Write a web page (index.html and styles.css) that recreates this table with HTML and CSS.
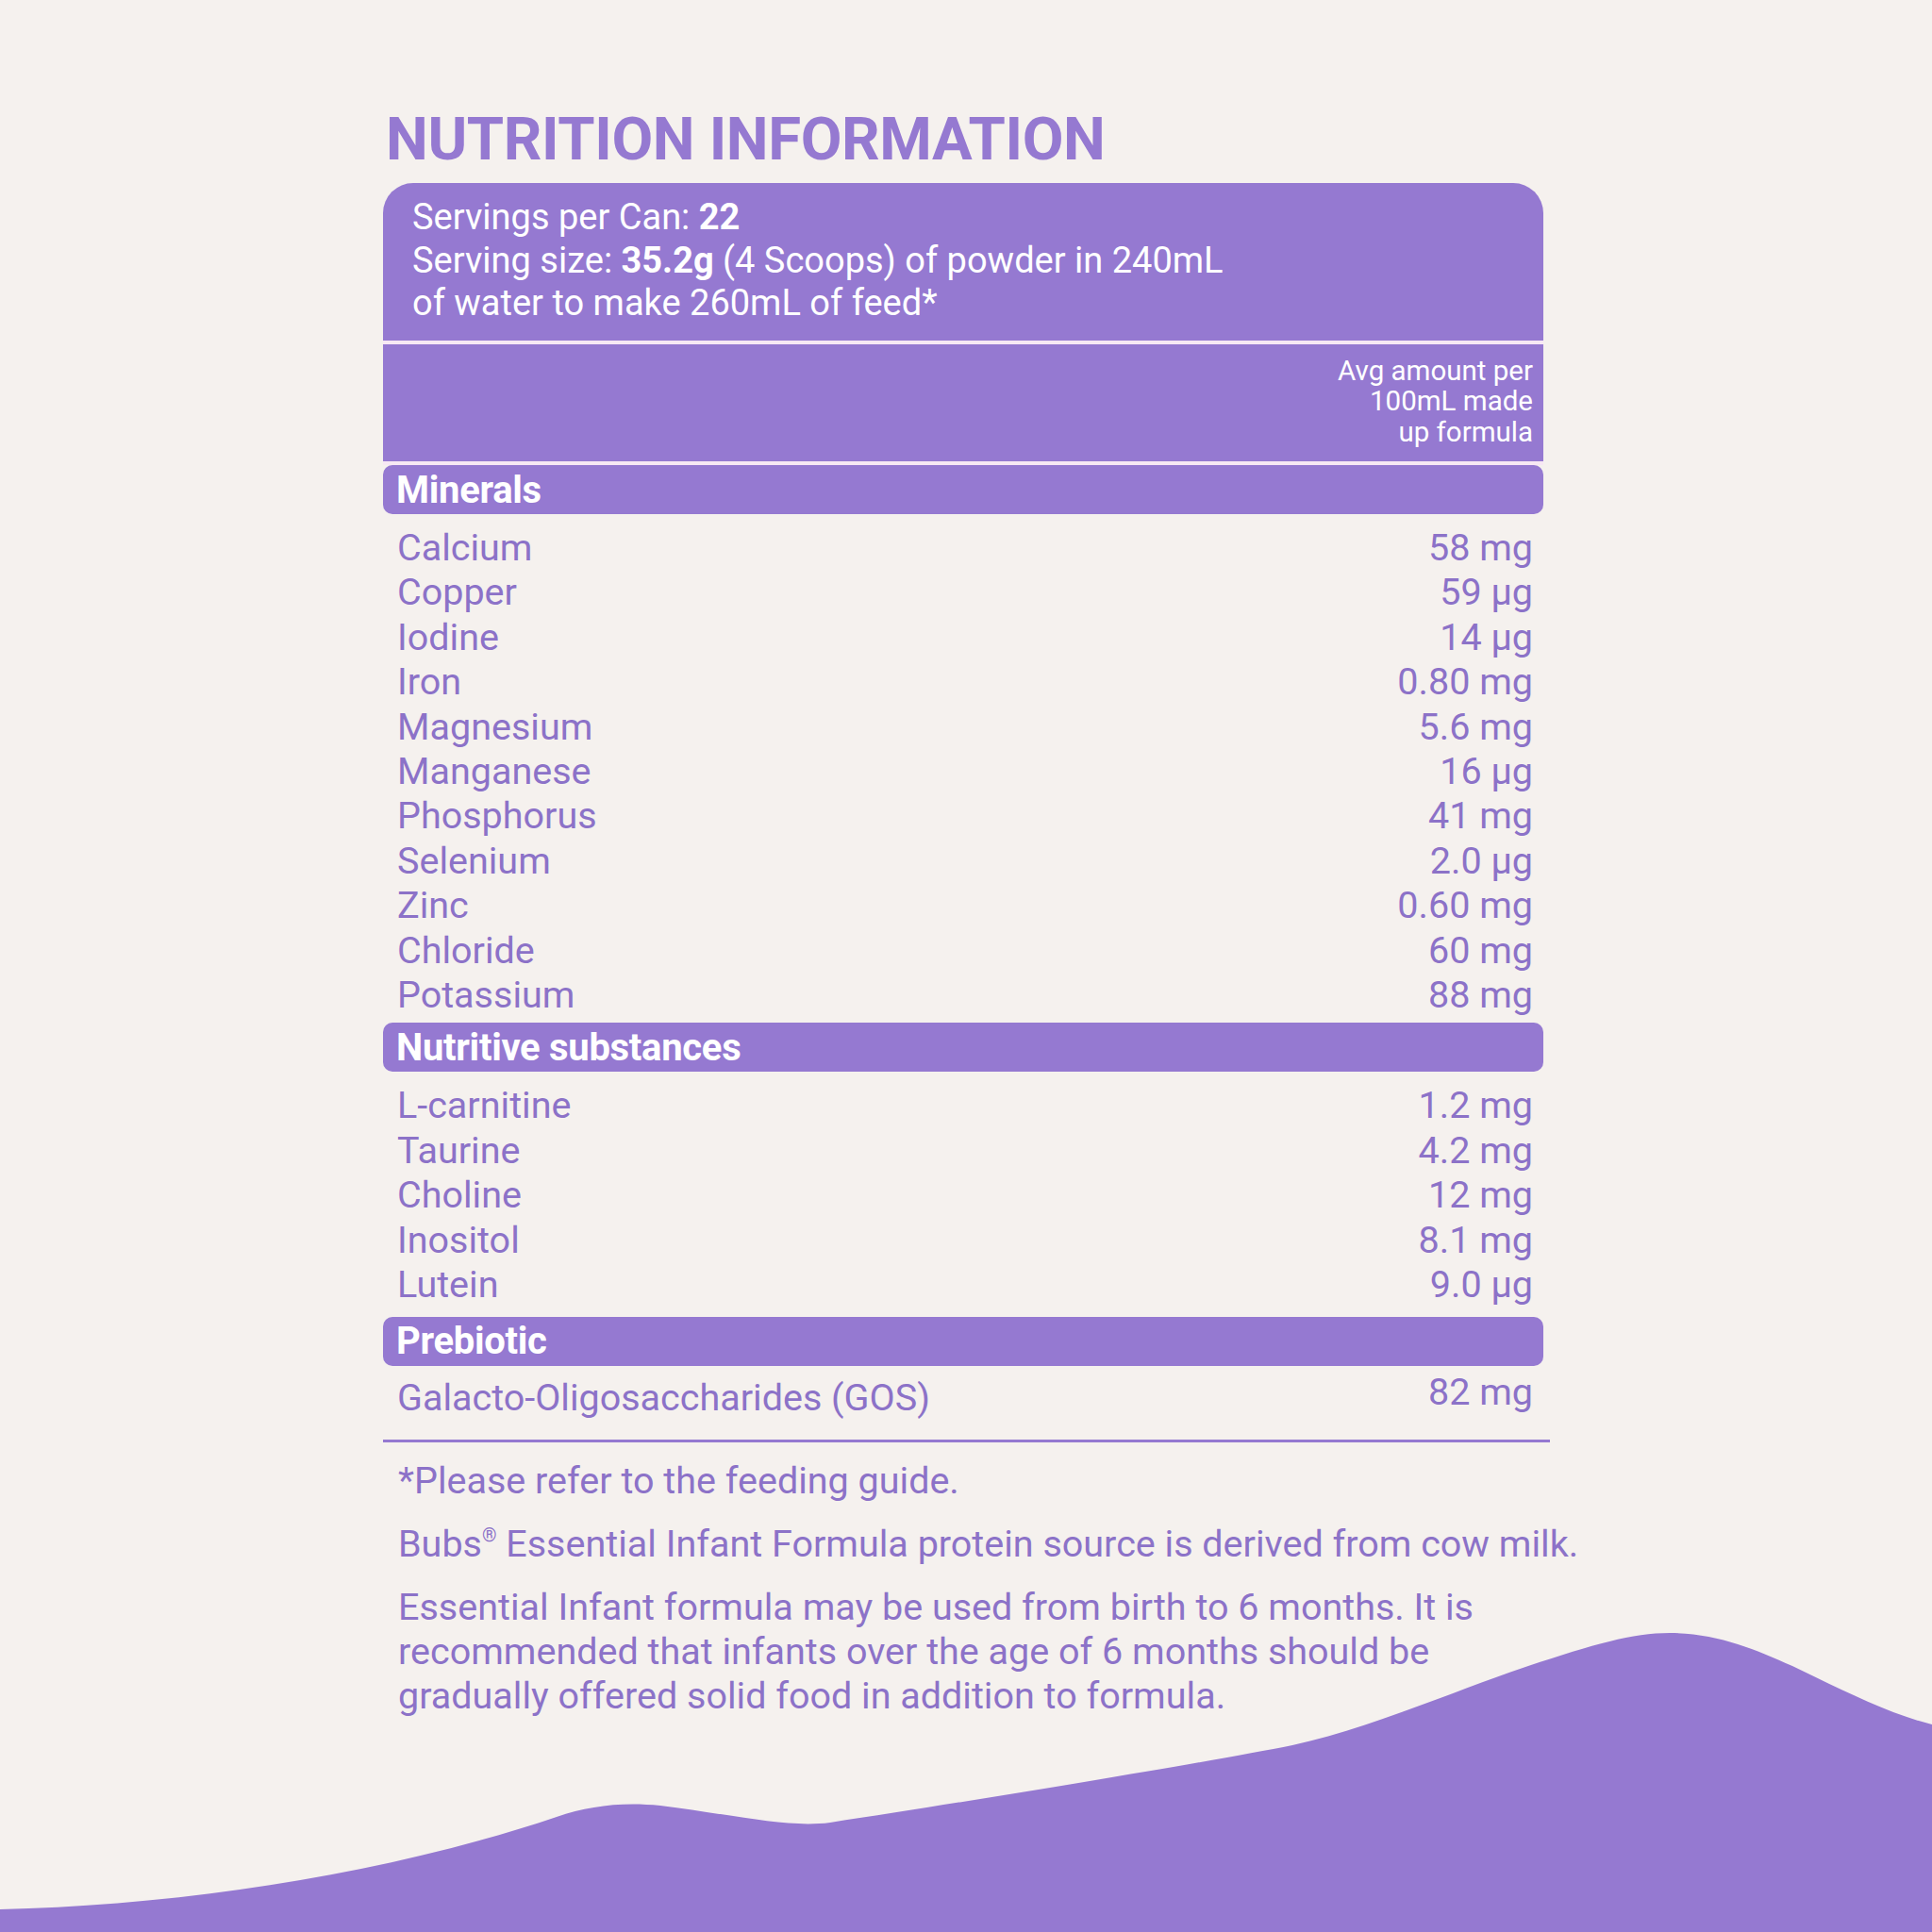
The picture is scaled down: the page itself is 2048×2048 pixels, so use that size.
FILE: index.html
```html
<!DOCTYPE html>
<html lang="en">
<head>
<meta charset="utf-8">
<title>Nutrition Information</title>
<link rel="stylesheet" href="styles.css">
</head>
<body>
<div class="page">
  <svg class="wave" viewBox="0 0 2048 350" preserveAspectRatio="none" aria-hidden="true">
    <path d="M0,326 C180,322 400,292 590,228 C625,216 660,212 700,216 C780,226 835,240 880,234 C1050,208 1280,170 1370,152 C1450,135 1540,95 1620,68 C1690,45 1730,33 1770,33 C1820,33 1860,50 1900,68 C1950,92 2000,118 2048,130 L2048,350 L0,350 Z"/>
  </svg>

  <main class="sheet">
    <h1 class="title">NUTRITION INFORMATION</h1>

    <section class="panel">
      <div class="serving">
        <p>Servings per Can: <b>22</b></p>
        <p>Serving size: <b>35.2g</b> (4 Scoops) of powder in 240mL</p>
        <p>of water to make 260mL of feed*</p>
      </div>
      <div class="colhead">Avg amount per<br>100mL made<br>up formula</div>

      <h2 class="group">Minerals</h2>
      <ul class="rows">
        <li class="row"><span>Calcium</span><span>58 mg</span></li>
        <li class="row"><span>Copper</span><span>59 µg</span></li>
        <li class="row"><span>Iodine</span><span>14 µg</span></li>
        <li class="row"><span>Iron</span><span>0.80 mg</span></li>
        <li class="row"><span>Magnesium</span><span>5.6 mg</span></li>
        <li class="row"><span>Manganese</span><span>16 µg</span></li>
        <li class="row"><span>Phosphorus</span><span>41 mg</span></li>
        <li class="row"><span>Selenium</span><span>2.0 µg</span></li>
        <li class="row"><span>Zinc</span><span>0.60 mg</span></li>
        <li class="row"><span>Chloride</span><span>60 mg</span></li>
        <li class="row"><span>Potassium</span><span>88 mg</span></li>
      </ul>

      <h2 class="group">Nutritive substances</h2>
      <ul class="rows rows--mid">
        <li class="row"><span>L-carnitine</span><span>1.2 mg</span></li>
        <li class="row"><span>Taurine</span><span>4.2 mg</span></li>
        <li class="row"><span>Choline</span><span>12 mg</span></li>
        <li class="row"><span>Inositol</span><span>8.1 mg</span></li>
        <li class="row"><span>Lutein</span><span>9.0 µg</span></li>
      </ul>

      <h2 class="group">Prebiotic</h2>
      <ul class="rows rows--last">
        <li class="row row--raised"><span>Galacto-Oligosaccharides (GOS)</span><span class="val">82 mg</span></li>
      </ul>
    </section>

    <hr class="divider">

    <div class="notes">
      <p>*Please refer to the feeding guide.</p>
      <p>Bubs<sup>®</sup> Essential Infant Formula protein source is derived from cow milk.</p>
      <p>Essential Infant formula may be used from birth to 6 months. It is<br>recommended that infants over the age of 6 months should be<br>gradually offered solid food in addition to formula.</p>
    </div>
  </main>
</div>
</body>
</html>
```

FILE: styles.css
```css
* { box-sizing: border-box; }

html, body {
  margin: 0;
  padding: 0;
  background: #f5f1ee;
}

.page {
  position: relative;
  width: 2048px;
  height: 2048px;
  overflow: hidden;
  background: #f5f1ee;
  font-family: Roboto, "Liberation Sans", sans-serif;
  color: #8c72c8;
}

.wave {
  position: absolute;
  left: 0;
  bottom: 0;
  width: 2048px;
  height: 350px;
  display: block;
}
.wave path { fill: #9579d1; }

.sheet {
  position: relative;
  margin-left: 406px;
  width: 1237px;
  padding-top: 115px;
}

.title {
  margin: 0;
  padding-left: 3px;
  font-size: 63.5px;
  line-height: 66px;
  font-weight: 700;
  color: #9579d1;
  letter-spacing: -0.4px;
}

.panel {
  margin-top: 13px;
  width: 1230px;
}

.serving {
  background: #9579d1;
  color: #fff;
  border-radius: 32px 32px 0 0;
  padding: 14px 20px 16px 31px;
  font-size: 38px;
  line-height: 45.5px;
  border-bottom: 4px solid #f7e8f4;
}
.serving p { margin: 0; }
.serving b { font-weight: 700; }

.colhead {
  background: #9579d1;
  color: #fff;
  text-align: right;
  padding: 12px 11px 15px 20px;
  font-size: 29.5px;
  line-height: 32.5px;
  border-bottom: 4px solid #f7e8f4;
}

.group {
  margin: 0;
  background: #9579d1;
  color: #fff;
  border-radius: 10px;
  height: 52px;
  display: flex;
  align-items: center;
  padding-left: 14px;
  font-size: 40px;
  font-weight: 700;
  letter-spacing: -0.3px;
}

.rows {
  list-style: none;
  margin: 0;
  padding: 12px 11px 6px 15px;
}
.rows--mid { padding-bottom: 10px; }
.rows--last { padding-bottom: 0; padding-top: 10px; }

.row {
  display: flex;
  justify-content: space-between;
  font-size: 39.5px;
  line-height: 47.4px;
}

.row--raised { align-items: flex-start; }
.row--raised .val { margin-top: -6px; }

.divider {
  margin: 21px 0 0 0;
  width: 1237px;
  height: 3px;
  border: 0;
  background: #9579d1;
}

.notes {
  padding-top: 17px;
  padding-left: 16px;
}
.notes p {
  margin: 0 0 20px 0;
  font-size: 39.5px;
  line-height: 47px;
  white-space: nowrap;
}
.notes sup {
  font-size: 0.5em;
  vertical-align: 0.8em;
  line-height: 0;
}
```
